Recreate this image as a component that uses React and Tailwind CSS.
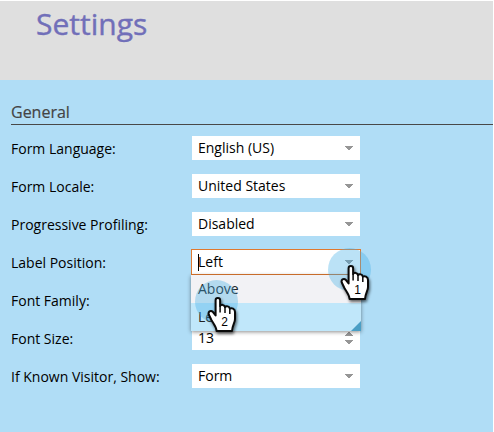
const rows = [
  { label: 'Form Language:', value: 'English (US)' },
  { label: 'Form Locale:', value: 'United States' },
  { label: 'Progressive Profiling:', value: 'Disabled' },
  { label: 'Label Position:', value: 'Left', open: true },
  { label: 'Font Family:', value: '' },
  { label: 'Font Size:', value: '13', spinner: true },
  { label: 'If Known Visitor, Show:', value: 'Form' },
];

function Caret() {
  return (
    <svg width="8" height="4" viewBox="0 0 8 4" className="block" shapeRendering="crispEdges">
      <path d="M0 0H8V1H7V2H6V3H5V4H3V3H2V2H1V1H0Z" fill="#969696" />
    </svg>
  );
}

function Spinner() {
  return (
    <div className="flex flex-col gap-1">
      <div className="rotate-180"><Caret /></div>
      <Caret />
    </div>
  );
}

function Pointer({ number }) {
  return (
    <svg width="48" height="58" viewBox="0 0 48 58" className="block overflow-visible">
      <circle cx="21.5" cy="21.5" r="21.5" fill="#42aee6" fillOpacity="0.36" />
      <g transform="translate(1 1)">
        <g style={{ filter: 'drop-shadow(1px 2px 1.5px rgba(0,0,0,0.6))' }}>
          <path
            d="M19.6 33V19.2C19.6 16.2 24.1 16.2 24.1 19.2V25C25 23.2 28.6 23.5 29 26C30.3 24.6 33.4 25.2 33.8 27.6C35.6 26.6 39 27.6 39 31V38C39 42 36.4 44 36 50H20.6C20.3 45.5 17.5 42.8 15.4 39L12.9 33.8C11.6 30.8 14.6 28.8 16.8 30.8L19.6 34.5Z"
            fill="white" stroke="#0a0a0a" strokeWidth="2" strokeLinejoin="round"
          />
          <path d="M24.1 25V31.5M29 26V32M33.8 27.6V33" fill="none" stroke="#0a0a0a" strokeWidth="1.5" />
        </g>
        <text x="28.7" y="45" textAnchor="middle" className="fill-black font-['Liberation_Sans',sans-serif] text-[12px]">{number}</text>
      </g>
    </svg>
  );
}

function Menu() {
  return (
    <div className="absolute -left-px top-[25px] z-10 h-14 w-[170px] bg-[#f2f2f5] shadow-[0_1px_4px_rgba(0,0,0,0.45)]">
      <div className="h-7 pl-[7px] leading-[27px] text-[#222]">Above</div>
      <div className="h-7 bg-[#c0e7fa] pl-[7px] leading-[27px] text-[#222]">Left</div>
      <svg width="10" height="10" className="absolute bottom-0 right-0">
        <path d="M10 0V10H0Z" fill="#4b9fc5" />
      </svg>
      <div className="absolute left-[4px] top-[5px]"><Pointer number="2" /></div>
    </div>
  );
}

function Field({ row }) {
  return (
    <div className={`relative flex h-6 w-[168px] items-center justify-between bg-white pl-1.5 pr-[7px] ${row.open ? 'z-10 outline outline-1 outline-[#e0792f]' : ''}`}>
      <span className="leading-6">{row.value}</span>
      {row.spinner ? <Spinner /> : <Caret />}
      {row.open && (
        <>
          <span className="absolute left-1.5 top-1 h-[17px] w-px bg-black" />
          <Menu />
          <div className="absolute left-[136px] top-[-2px] z-20"><Pointer number="1" /></div>
        </>
      )}
    </div>
  );
}

export default function App() {
  return (
    <main className="h-[432px] w-[494px] overflow-hidden border-r border-white bg-[#b0ddf6] font-['Open_Sans',sans-serif] text-[14px] text-black">
      <header className="h-20 border-t border-white bg-[#dfdfdf] pl-9 pt-[3px]">
        <h1 className="text-[30px] leading-10 text-[#716fb9] [-webkit-text-stroke:0.4px_#716fb9]">Settings</h1>
      </header>
      <section className="pl-[11px] pt-[21px]">
        <h2 className="h-6 border-b border-[#484848] text-[16px] leading-[22px] text-[#444] [-webkit-text-stroke:0.2px_#444]">General</h2>
        <div className="flex flex-col gap-3.5 pt-[11px]">
          {rows.map((row) => (
            <div key={row.label} className="flex h-6 items-center">
              <div className="w-[181px]">{row.label}</div>
              <Field row={row} />
            </div>
          ))}
        </div>
      </section>
    </main>
  );
}
